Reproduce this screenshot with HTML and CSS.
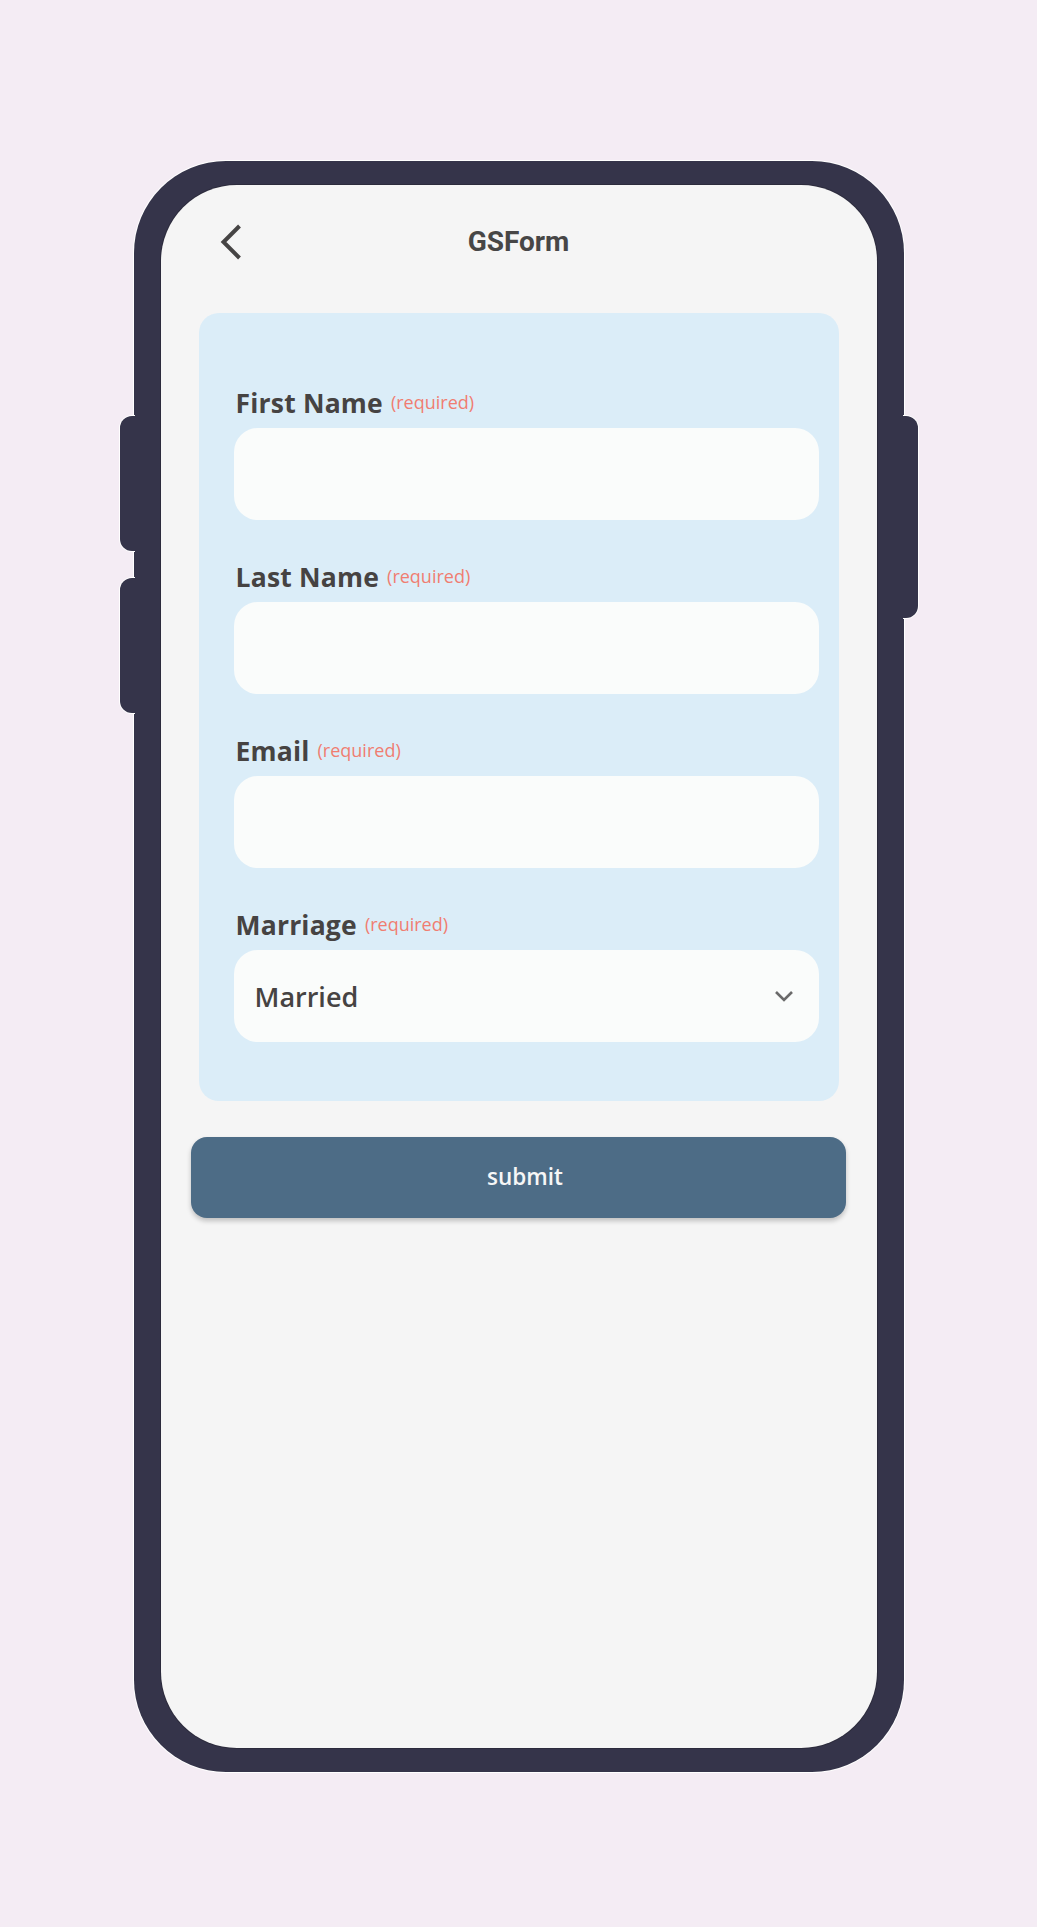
FILE: index.html
```html
<!DOCTYPE html>
<html lang="en">
<head>
<meta charset="utf-8">
<title>GSForm</title>
<link rel="stylesheet" href="styles.css">
</head>
<body>
<div class="page">
  <div class="phone">
    <span class="side side-l1"></span>
    <span class="side side-l2"></span>
    <span class="side side-r1"></span>
    <div class="screen">
      <header class="topbar">
        <div class="back-wrap">
          <button class="back" aria-label="Back">
            <svg width="22" height="36" viewBox="0 0 22 36"><polyline points="19.5,2 3.5,18 19.5,34" fill="none" stroke="#464444" stroke-width="4"/></svg>
          </button>
        </div>
        <h1 class="title">GSForm</h1>
        <div></div>
      </header>
      <main class="content">
        <form class="card">
          <div class="field">
            <div class="label"><span class="name">First Name</span><span class="req">(required)</span></div>
            <div class="input"></div>
          </div>
          <div class="field">
            <div class="label"><span class="name">Last Name</span><span class="req">(required)</span></div>
            <div class="input"></div>
          </div>
          <div class="field">
            <div class="label"><span class="name">Email</span><span class="req">(required)</span></div>
            <div class="input"></div>
          </div>
          <div class="field">
            <div class="label"><span class="name">Marriage</span><span class="req">(required)</span></div>
            <div class="input select">
              <span class="value">Married</span>
              <svg class="caret" width="20" height="12" viewBox="0 0 20 12"><polyline points="2,2 10,10 18,2" fill="none" stroke="#6a6a6a" stroke-width="2.6"/></svg>
            </div>
          </div>
        </form>
        <button class="submit" type="button">submit</button>
      </main>
    </div>
  </div>
</div>
</body>
</html>
```
FILE: styles.css
```css
html, body {
  margin: 0;
  padding: 0;
  background: #f4ecf4;
}
body {
  min-height: 1927px;
  font-family: "Open Sans", "Noto Sans", sans-serif;
}
.page {
  padding-top: 161px;
}
.phone {
  position: relative;
  width: 770px;
  height: 1611px;
  margin: 0 auto;
  box-sizing: border-box;
  padding: 24px 27px;
  background: #35344a;
  border-radius: 92px;
  box-shadow: 0 0 0 1px #ffffff;
}
.side {
  position: absolute;
  width: 15px;
  background: #35344a;
}
.side-l1, .side-l2 {
  left: -14px;
  border-radius: 12px 0 0 12px;
  height: 135px;
  box-shadow: -1px 0 0 #ffffff, 0 -1px 0 #ffffff, 0 1px 0 #ffffff;
}
.side-l1 { top: 255px; }
.side-l2 { top: 417px; }
.side-r1 {
  right: -14px;
  top: 255px;
  height: 202px;
  border-radius: 0 12px 12px 0;
  box-shadow: 1px 0 0 #ffffff, 0 -1px 0 #ffffff, 0 1px 0 #ffffff;
}
.screen {
  position: relative;
  z-index: 1;
  height: 100%;
  background: #f5f5f5;
  border-radius: 76px;
  box-shadow: 0 0 0 1px #2c2b3c;
  overflow: hidden;
}
.topbar {
  height: 114px;
  display: grid;
  grid-template-columns: 1fr auto 1fr;
  align-items: center;
}
.back-wrap {
  padding-left: 59px;
  display: flex;
  align-items: center;
}
.back {
  border: 0;
  padding: 0;
  background: none;
  display: flex;
}
.title {
  margin: 0;
  font-family: Roboto, "Liberation Sans", sans-serif;
  font-weight: 700;
  font-size: 28px;
  line-height: 1;
  color: #474646;
}
.content {
  display: flex;
  flex-direction: column;
}
.card {
  margin: 14px 38px 0;
  padding: 74px 20px 59px 35px;
  background: #dbedf8;
  border-radius: 20px;
  display: flex;
  flex-direction: column;
  gap: 41px;
}
.field {
  display: flex;
  flex-direction: column;
}
.label {
  height: 32px;
  margin-bottom: 9px;
  padding-left: 2px;
  display: flex;
  align-items: baseline;
  white-space: nowrap;
}
.name {
  font-size: 26.5px;
  line-height: 32px;
  font-weight: 700;
  color: #464342;
  letter-spacing: 0.2px;
}
.req {
  margin-left: 8px;
  font-size: 18px;
  font-weight: 400;
  color: #f07d71;
  position: relative;
  top: -4px;
}
.input {
  height: 92px;
  background: #fafcfb;
  border-radius: 24px;
}
.select {
  display: flex;
  align-items: center;
  justify-content: space-between;
  padding: 0 25px 0 21px;
}
.value {
  font-size: 27px;
  font-weight: 600;
  color: #464342;
  line-height: 1;
}
.caret {
  display: block;
}
.submit {
  margin: 36px 31px 0 30px;
  height: 81px;
  border: 0;
  border-radius: 16px;
  background: #4d6c86;
  color: #f6f6f6;
  font-family: "Open Sans", "Noto Sans", sans-serif;
  font-size: 22.5px;
  font-weight: 600;
  line-height: 1;
  padding: 0 0 0 14px;
  box-shadow: 0 3px 5px rgba(0, 0, 0, 0.22);
}
```
